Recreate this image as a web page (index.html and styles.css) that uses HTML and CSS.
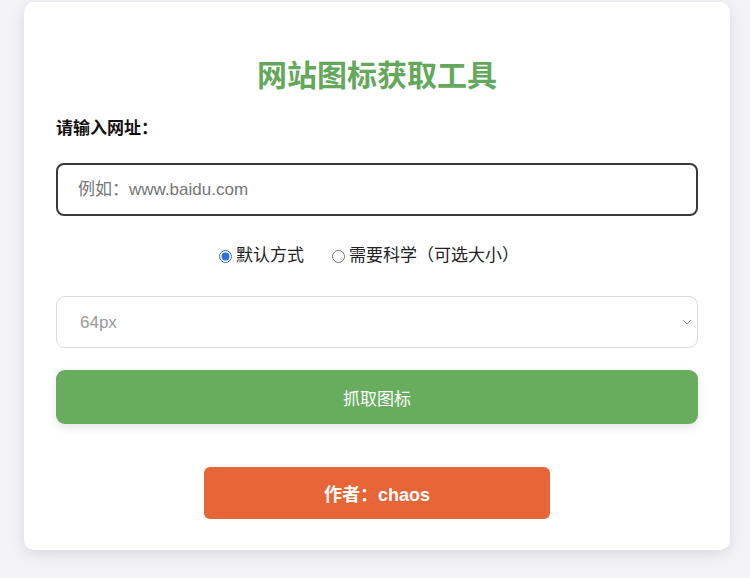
FILE: index.html
```html
<!DOCTYPE html>
<html lang="zh">
<head>
<meta charset="utf-8">
<link rel="stylesheet" href="styles.css">
</head>
<body>
<div class="card">
  <h1 class="title">网站图标获取工具</h1>
  <label class="label" for="url">请输入网址：</label>
  <input class="url-input" id="url" type="text" placeholder="例如：www.baidu.com">
  <div class="radios">
    <label class="radio"><input type="radio" name="mode" checked>默认方式</label>
    <label class="radio"><input type="radio" name="mode">需要科学（可选大小）</label>
  </div>
  <div class="select-wrap">
    <select class="size-select" disabled>
      <option>64px</option>
    </select>
    <svg class="chev" width="10" height="6" viewBox="0 0 10 6"><path d="M1 1l4 4 4-4" fill="none" stroke="#9a9a9a" stroke-width="1"/></svg>
  </div>
  <button class="fetch-btn">抓取图标</button>
  <div class="author-row"><button class="author-btn">作者：chaos</button></div>
</div>
</body>
</html>
```

FILE: styles.css
```css
html, body {
  margin: 0;
  padding: 0;
}
body {
  background: #f3f3f7;
  font-family: "Liberation Sans", Arial, "Noto Sans CJK SC", sans-serif;
  height: 578px;
  overflow: hidden;
}
.card {
  box-sizing: border-box;
  width: 706px;
  margin: 2px 0 0 24px;
  background: #fff;
  border-radius: 10px;
  box-shadow: 0 4px 14px rgba(0,0,0,0.10);
  padding: 54px 32px 31px;
  display: flex;
  flex-direction: column;
}
.title {
  margin: 0;
  text-align: center;
  color: #64a85b;
  font-size: 30px;
  font-weight: bold;
  line-height: 40px;
}
.label {
  margin-top: 22px;
  font-size: 17px;
  font-weight: bold;
  color: #111;
  line-height: 22px;
}
.url-input {
  margin-top: 23px;
  box-sizing: border-box;
  height: 53px;
  width: 100%;
  border: 2px solid #3a3a3a;
  border-radius: 8px;
  padding: 0 20px;
  font-size: 17px;
  font-family: inherit;
  outline: none;
}
.url-input::placeholder {
  color: #767676;
}
.radios {
  margin-top: 29px;
  display: flex;
  justify-content: center;
  gap: 28px;
  padding-right: 16px;
  font-size: 17px;
  color: #222;
  line-height: 22px;
}
.radio {
  display: flex;
  align-items: center;
}
.radio input {
  margin: 0 4px 0 0;
  width: 13px;
  height: 13px;
  accent-color: #2f6fdf;
}
.select-wrap {
  margin-top: 29px;
  position: relative;
}
.size-select {
  box-sizing: border-box;
  width: 100%;
  height: 52px;
  border: 1px solid #dcdcdc;
  border-radius: 9px;
  background: #fff;
  padding: 0 23px;
  font-size: 17px;
  font-family: inherit;
  color: #9a9a9a;
  appearance: none;
  -webkit-appearance: none;
  opacity: 1;
}
.chev {
  position: absolute;
  right: 6px;
  top: 23px;
}
.fetch-btn {
  margin-top: 22px;
  height: 54px;
  width: 100%;
  border: none;
  border-radius: 9px;
  background: #68ac5e;
  color: #fff;
  font-size: 17px;
  font-family: inherit;
  box-shadow: 0 4px 10px rgba(0,0,0,0.10);
}
.author-row {
  margin-top: 43px;
  display: flex;
  justify-content: center;
}
.author-btn {
  width: 346px;
  height: 52px;
  border: none;
  border-radius: 6px;
  background: #e86537;
  color: #fff;
  font-size: 18px;
  font-weight: bold;
  font-family: inherit;
}
```
